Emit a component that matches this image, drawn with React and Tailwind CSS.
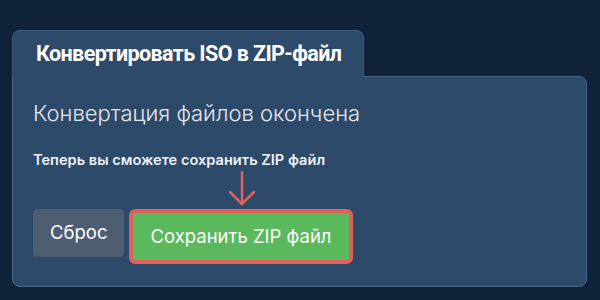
import React from 'react';

const App = () => {
  return (
    <div className="w-[600px] h-[300px] bg-[#11233a] pt-[30px] pl-[12px] font-['Inter',sans-serif] overflow-hidden">
      <div className="w-[575px]">
        {/* tab */}
        <div className="relative z-10 -mb-px w-[352px] h-[47px] bg-[#2d4a6a] border border-b-0 border-[#3f5b7c] rounded-t-lg flex items-center pl-[23px]">
          <span className="text-white text-[21.5px] font-bold tracking-[-0.6px] font-['Roboto',sans-serif]">
            Конвертировать ISO в ZIP-файл
          </span>
        </div>

        {/* panel */}
        <div className="h-[211px] bg-[#2d4a6a] border border-[#4b6888] rounded-lg rounded-tl-none px-[20px] pt-[20px]">
          <h2 className="text-[22px] font-light text-[#e4e8ee] leading-[32px]">
            Конвертация файлов окончена
          </h2>
          <p className="mt-[21px] text-[14.6px] font-semibold text-[#eef1f5] leading-[20px]">
            Теперь вы сможете сохранить ZIP файл
          </p>

          <div className="relative mt-[39px] flex items-start gap-[5px]">
            <svg
              className="absolute left-[194px] -top-[38px]"
              width="30"
              height="36"
              viewBox="0 0 30 36"
              fill="none"
              stroke="#e0625c"
              strokeWidth="2.5"
              strokeLinecap="round"
              strokeLinejoin="round"
            >
              <path d="M15 1 V33" />
              <path d="M3 21 L15 33 L27 21" />
            </svg>
            <button className="h-[48px] px-[17px] rounded bg-[#4e5e72] text-white text-[18.5px]">
              Сброс
            </button>
            <button className="h-[55px] px-[17px] rounded-md border-[4px] border-[#e0605a] bg-[#5cb85c] text-white text-[18.5px]">
              Сохранить ZIP файл
            </button>
          </div>
        </div>
      </div>
    </div>
  );
};

export default App;
